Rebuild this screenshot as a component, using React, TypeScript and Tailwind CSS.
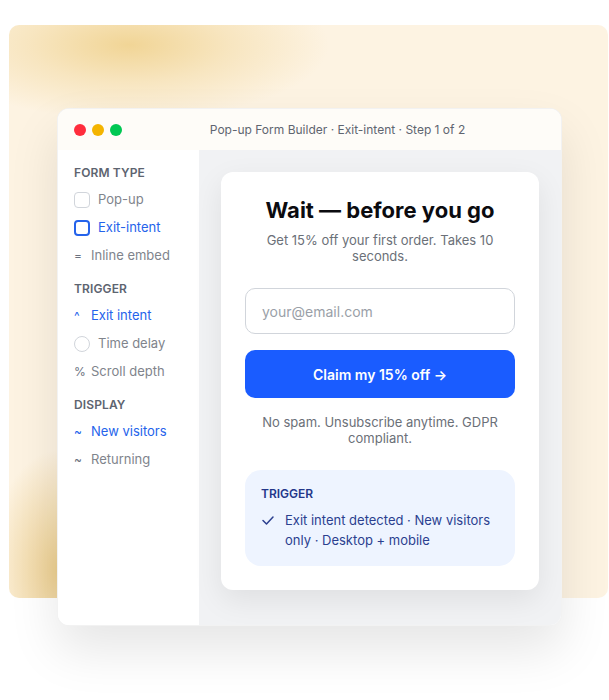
import React from "react";

const Glyph = ({ c, blue }: { c: string; blue?: boolean }) => (
  <span className={`w-[9px] whitespace-nowrap text-[12px] leading-none ${blue ? "text-[#2563eb]" : "text-[#6b7280]"}`}>{c}</span>
);

function Row({ icon, label, blue }: { icon: React.ReactNode; label: string; blue?: boolean }) {
  return (
    <div className="flex h-[28px] items-center gap-2">
      {icon}
      <span className={`text-[13px] ${blue ? "text-[#2563eb]" : "text-[#80848c]"}`}>{label}</span>
    </div>
  );
}

function Header({ children, first }: { children: React.ReactNode; first?: boolean }) {
  return (
    <div className={`flex h-[20px] items-center text-[12px] font-semibold uppercase tracking-[0.01em] text-[#5d6470] ${first ? "" : "mt-[9px]"}`}>
      {children}
    </div>
  );
}

export default function App() {
  return (
    <div className="relative h-[700px] w-[609px] overflow-hidden bg-white" style={{ fontFamily: "Inter, 'Noto Sans', sans-serif" }}>
      {/* backdrop */}
      <div className="absolute left-[9px] top-[25px] h-[573px] w-[599px] overflow-hidden rounded-[10px] bg-[#fdf3e2] bg-[radial-gradient(ellipse_200px_75px_at_120px_20px,#f1d596_0%,rgba(241,213,150,0.45)_50%,rgba(253,243,226,0)_100%),radial-gradient(ellipse_70px_120px_at_50px_545px,#ecce8e_0%,rgba(236,206,142,0.5)_50%,rgba(253,243,226,0)_100%)]" />

      <div className="relative pl-[57px] pt-[108px]">
        <div className="flex h-[518px] w-[505px] flex-col overflow-hidden rounded-[12px] border border-black/5 bg-white shadow-[0_24px_50px_rgba(0,0,0,0.10)]">
          {/* title bar */}
          <div className="flex h-[41px] shrink-0 items-center gap-2 bg-[#fefcf8] px-4">
            <div className="flex gap-[6px]">
              <span className="h-[12px] w-[12px] rounded-full bg-[#ff2d3d]" />
              <span className="h-[12px] w-[12px] rounded-full bg-[#f4b400]" />
              <span className="h-[12px] w-[12px] rounded-full bg-[#00c853]" />
            </div>
            <div className="flex-1 text-center text-[12px] text-[#5f6570]">Pop-up Form Builder · Exit-intent · Step 1 of 2</div>
          </div>

          <div className="flex flex-1">
            {/* sidebar */}
            <div className="w-[141px] shrink-0 bg-white px-4 pt-[13px]">
              <Header first>Form type</Header>
              <div className="mt-[3px]">
                <Row icon={<span className="h-[16px] w-[16px] rounded-[4px] border border-[#d1d5db]" />} label="Pop-up" />
                <Row icon={<span className="h-[16px] w-[16px] rounded-[4px] border-2 border-[#2563eb]" />} label="Exit-intent" blue />
                <Row icon={<Glyph c="=" />} label="Inline embed" />
              </div>
              <Header>Trigger</Header>
              <div className="mt-[3px]">
                <Row icon={<Glyph c="^" blue />} label="Exit intent" blue />
                <Row icon={<span className="h-[16px] w-[16px] rounded-full border border-[#d1d5db]" />} label="Time delay" />
                <Row icon={<Glyph c="%" />} label="Scroll depth" />
              </div>
              <Header>Display</Header>
              <div className="mt-[3px]">
                <Row icon={<Glyph c="~" blue />} label="New visitors" blue />
                <Row icon={<Glyph c="~" />} label="Returning" />
              </div>
            </div>

            {/* main */}
            <div className="flex-1 bg-[#f1f2f4] p-[22px]">
              <div className="rounded-[12px] bg-white px-6 pb-6 pt-6 text-center shadow-[0_10px_30px_rgba(0,0,0,0.08)]">
                <div className="text-[22px] font-bold leading-[28px] text-[#0b0b0f]">Wait — before you go</div>
                <div className="mx-auto mt-2 text-[13px] leading-[16px] text-[#6b7078]">Get 15% off your first order. Takes 10 seconds.</div>
                <div className="mt-6 flex h-[46px] items-center rounded-[10px] border border-[#d1d5db] px-4 text-left text-[14px] text-[#9a9fa8]">
                  your@email.com
                </div>
                <div className="mt-4 flex h-[48px] items-center justify-center rounded-[10px] bg-[#1a5cff] text-[14px] font-semibold text-white">
                  Claim my 15% off →
                </div>
                <div className="mx-auto mt-4 text-[13px] leading-[16px] text-[#6b7078]">No spam. Unsubscribe anytime. GDPR compliant.</div>
                <div className="mt-6 rounded-[16px] bg-[#eef4ff] p-4 text-left">
                  <div className="text-[12px] font-semibold leading-[16px] text-[#23378a]">TRIGGER</div>
                  <div className="mt-2 flex gap-[10px] text-[13px] leading-[20px] text-[#2b3f8f]">
                    <svg width="14" height="20" viewBox="0 0 14 20" className="shrink-0">
                      <path d="M2 10.5 L5.5 14 L12 7" fill="none" stroke="#2b3f8f" strokeWidth="1.5" strokeLinecap="round" strokeLinejoin="round" />
                    </svg>
                    <span>Exit intent detected · New visitors only · Desktop + mobile</span>
                  </div>
                </div>
              </div>
            </div>
          </div>
        </div>
      </div>
    </div>
  );
}
